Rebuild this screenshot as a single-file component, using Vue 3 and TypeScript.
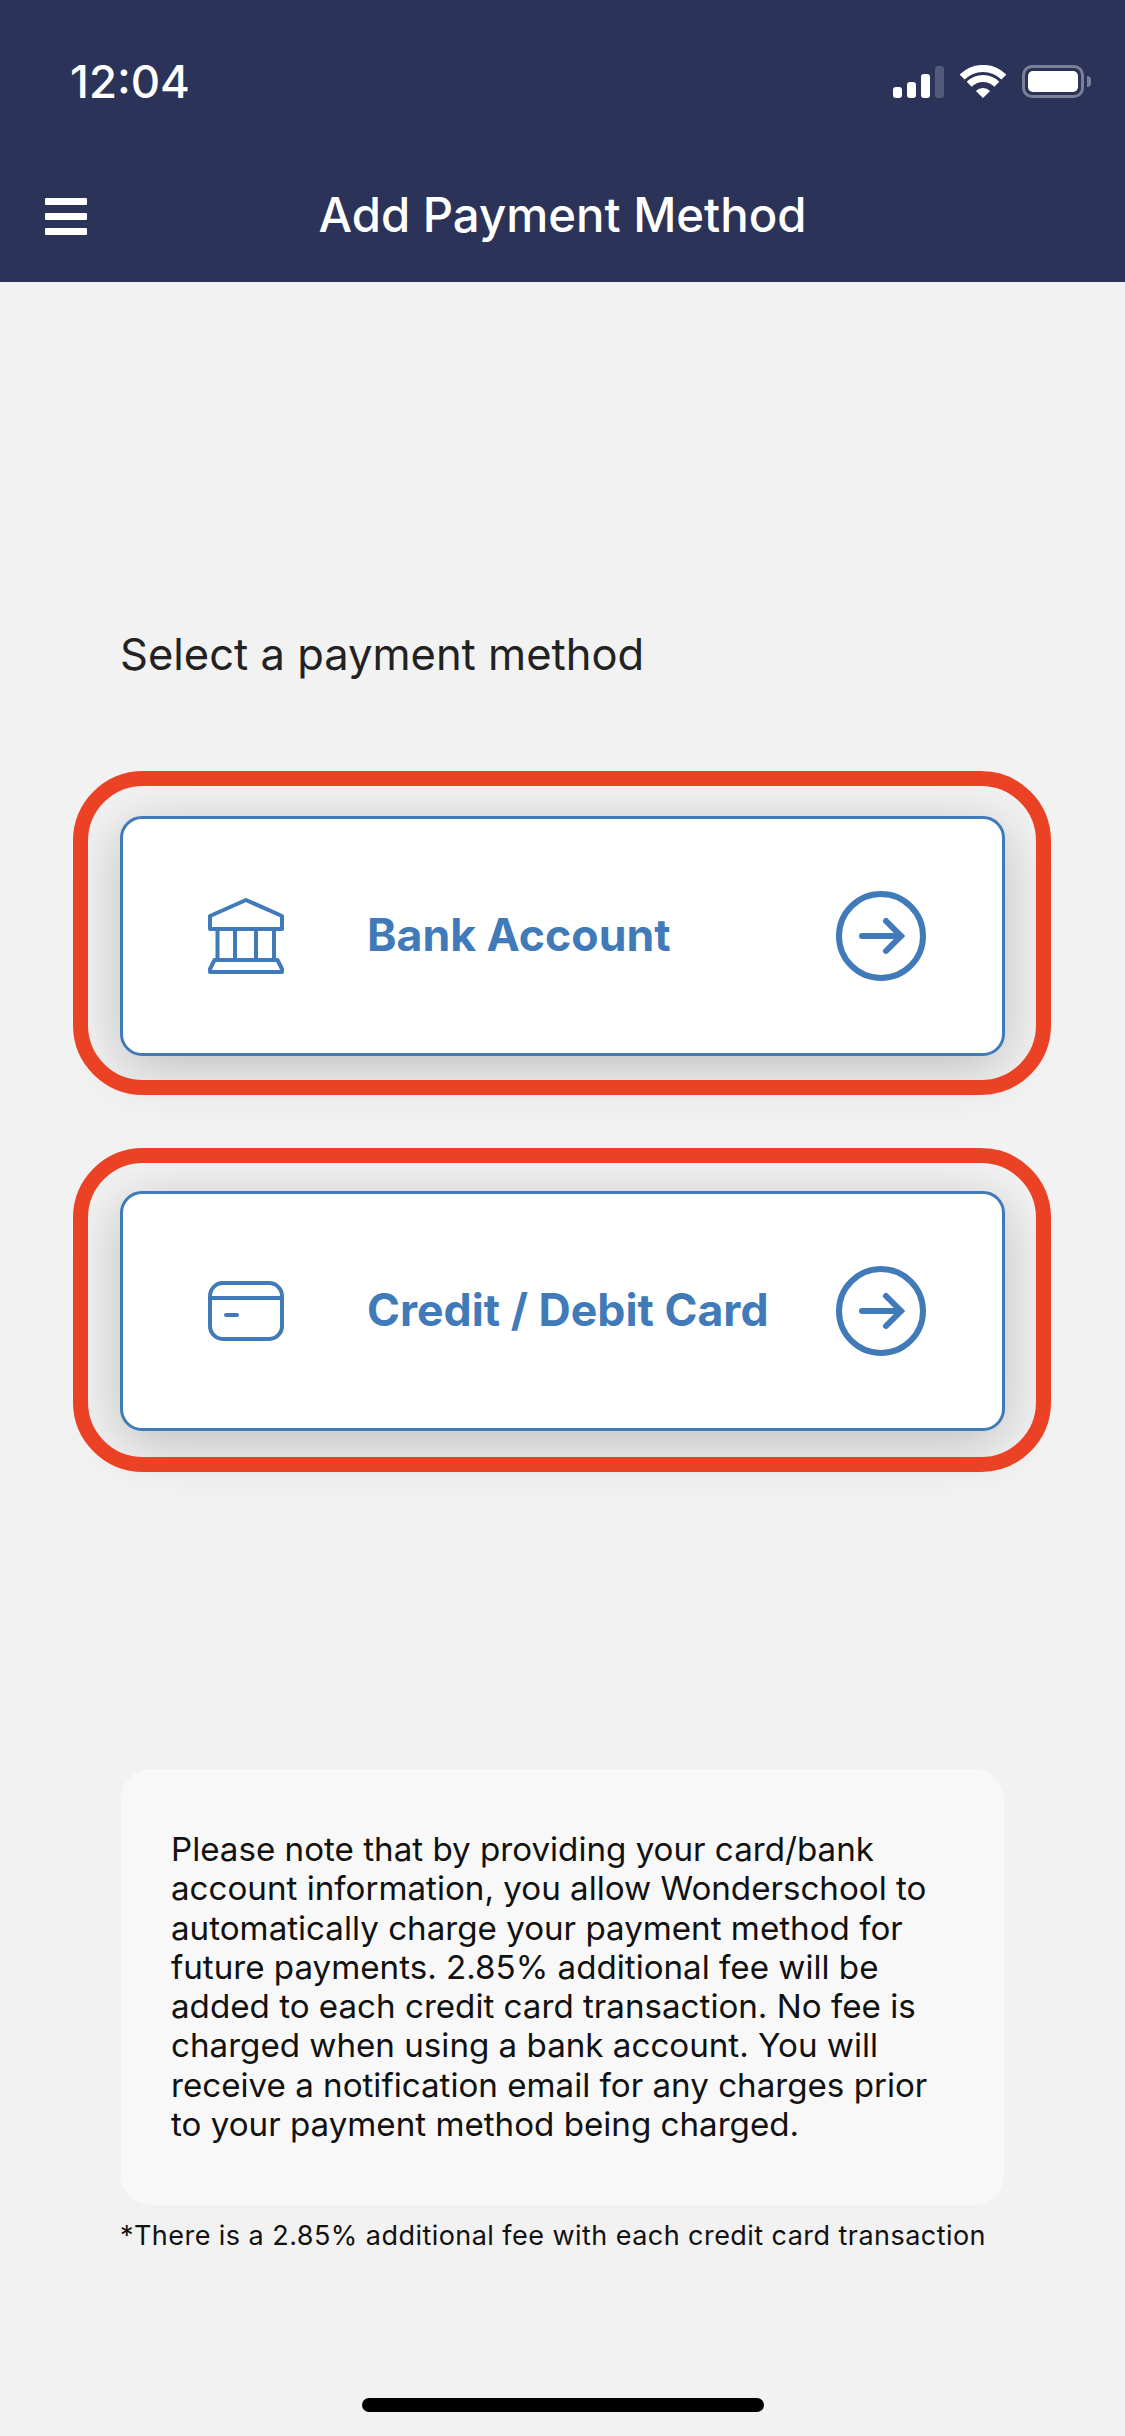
<template>
  <div class="page">
    <header class="top">
      <div class="status">
        <span class="time">12:04</span>
        <div class="status-icons">
          <div class="signal">
            <i class="b1" />
            <i class="b2" />
            <i class="b3" />
            <i class="b4" />
          </div>
          <svg class="wifi" width="46" height="33" viewBox="0 0 46 33" fill="none">
            <path d="M2.1 12.1A29.5 29.5 0 0 1 43.9 12.1" stroke="#fff" stroke-width="7" />
            <path d="M9.2 19.2A19.5 19.5 0 0 1 36.8 19.2" stroke="#fff" stroke-width="7" />
            <path d="M23 33L15.9 25.9A10 10 0 0 1 30.1 25.9Z" fill="#fff" />
          </svg>
          <div class="battery">
            <div class="battery-fill" />
          </div>
          <div class="battery-nub" />
        </div>
      </div>
      <nav class="nav">
        <div class="burger">
          <i />
          <i />
          <i />
        </div>
        <h1 class="title">Add Payment Method</h1>
        <div />
      </nav>
    </header>

    <main class="content">
      <p class="lead">Select a payment method</p>

      <div class="methods">
        <div v-for="m in methods" :key="m.key" class="method">
          <div class="method-icon">
            <svg v-if="m.key === 'bank'" width="76" height="76" viewBox="0 0 76 76" fill="none" stroke="#417ab8" stroke-width="4" stroke-linejoin="round">
              <path d="M38 2L74 18V31H2V18Z" />
              <path d="M9.5 31V62M27 31V62M48 31V62M66 31V62" />
              <path d="M6.500 62H69.500L74 71V74H2V71Z" />
            </svg>
            <svg v-else width="76" height="60" viewBox="0 0 76 60" fill="none" stroke="#417ab8" stroke-width="4">
              <rect x="2" y="2" width="72" height="56" rx="13" />
              <path d="M2 17H74" />
              <path d="M18 34H29" stroke-linecap="round" />
            </svg>
          </div>
          <span class="method-label">{{ m.label }}</span>
          <svg class="method-arrow" width="90" height="90" viewBox="0 0 90 90" fill="none" stroke="#417ab8">
            <circle cx="45" cy="45" r="42" stroke-width="6" />
            <path d="M26 45H65M50 30L65 45L50 60" stroke-width="6" stroke-linecap="round" stroke-linejoin="miter" />
          </svg>
        </div>
      </div>

      <div class="note">
        Please note that by providing your card/bank account information, you allow Wonderschool to automatically charge your payment method for future payments. 2.85% additional fee will be added to each credit card transaction. No fee is charged when using a bank account. You will receive a notification email for any charges prior to your payment method being charged.
      </div>
      <p class="footnote">*There is a 2.85% additional fee with each credit card transaction</p>
    </main>

    <div class="home-bar" />
  </div>
</template>

<script setup lang="ts">
const methods = [
  { key: 'bank', label: 'Bank Account' },
  { key: 'card', label: 'Credit / Debit Card' }
]
</script>

<style scoped>
.page {
  width: 1125px;
  height: 2436px;
  background: #f2f2f2;
  display: flex;
  flex-direction: column;
  font-family: Inter, "Liberation Sans", sans-serif;
  overflow: hidden;
}

.top {
  height: 282px;
  box-sizing: border-box;
  background: #2b3358;
  color: #fff;
  flex-shrink: 0;
}

.status {
  display: flex;
  align-items: center;
  justify-content: space-between;
  height: 33px;
  padding: 65px 34px 0 70px;
}

.time {
  font-size: 45.5px;
  font-weight: 500;
  line-height: 33px;
}

.status-icons {
  display: flex;
  align-items: center;
}

.signal {
  display: flex;
  align-items: flex-end;
  gap: 5px;
  height: 33px;
  margin-right: 16px;
}

.signal i {
  display: block;
  width: 9px;
  background: #fff;
  border-radius: 3px;
}

.signal .b1 {
  height: 11px;
}

.signal .b2 {
  height: 16px;
}

.signal .b3 {
  height: 24px;
}

.signal .b4 {
  height: 32px;
  background: #545b7a;
}

.battery {
  width: 62px;
  height: 33px;
  box-sizing: border-box;
  margin-left: 16px;
  padding: 3px;
  border: 3px solid #7b8099;
  border-radius: 10px;
}

.battery-fill {
  height: 100%;
  background: #fff;
  border-radius: 5px;
}

.battery-nub {
  width: 4px;
  height: 11px;
  margin-left: 3px;
  background: #7b8099;
  border-radius: 0 4px 4px 0;
}

.nav {
  display: grid;
  grid-template-columns: 1fr auto 1fr;
  align-items: center;
  padding: 89px 45px 0;
}

.burger {
  display: flex;
  flex-direction: column;
  gap: 8px;
  width: 42px;
  margin-top: 2px;
}

.burger i {
  display: block;
  height: 7px;
  background: #fff;
  border-radius: 1px;
}

.title {
  margin: 0;
  font-size: 47.3px;
  font-weight: 500;
  line-height: 56px;
  white-space: nowrap;
}

.content {
  padding: 0 120px;
}

.lead {
  margin: 344px 0 0;
  font-size: 43.5px;
  line-height: 56px;
  color: #222;
}

.methods {
  display: flex;
  flex-direction: column;
  gap: 135px;
  margin-top: 134px;
}

.method {
  position: relative;
  display: flex;
  align-items: center;
  height: 240px;
  box-sizing: border-box;
  padding: 0 76px 0 85px;
  background: #fff;
  border: 3px solid #417ab8;
  border-radius: 22px;
  box-shadow: 0 12px 55px rgba(0, 0, 0, 0.22);
}

/* red highlight ring drawn over the card shadow */
.method::after {
  content: "";
  position: absolute;
  top: -48px;
  right: -49px;
  bottom: -42px;
  left: -50px;
  border: 15px solid #eb4125;
  border-radius: 70px;
  pointer-events: none;
}

.method:last-child::after {
  top: -46px;
  bottom: -44px;
}

.method-icon {
  display: flex;
  align-items: center;
  width: 76px;
}

.method-label {
  margin-left: 83px;
  margin-top: -2px;
  font-size: 44.6px;
  font-weight: 700;
  color: #417ab8;
  white-space: nowrap;
}

.method-arrow {
  margin-left: auto;
  flex-shrink: 0;
}

.note {
  margin: 338px 1px 0;
  height: 436px;
  box-sizing: border-box;
  padding: 61px 69px 0 50px;
  background: #f8f8f8;
  border-radius: 30px;
  font-size: 33.15px;
  line-height: 39.3px;
  color: #111;
}

.footnote {
  margin: 14px 0 0;
  font-size: 27px;
  letter-spacing: 0.45px;
  line-height: 34px;
  color: #111;
  white-space: nowrap;
}

.home-bar {
  position: absolute;
  left: 362px;
  top: 2398px;
  width: 402px;
  height: 14px;
  background: #000;
  border-radius: 7px;
}
</style>
